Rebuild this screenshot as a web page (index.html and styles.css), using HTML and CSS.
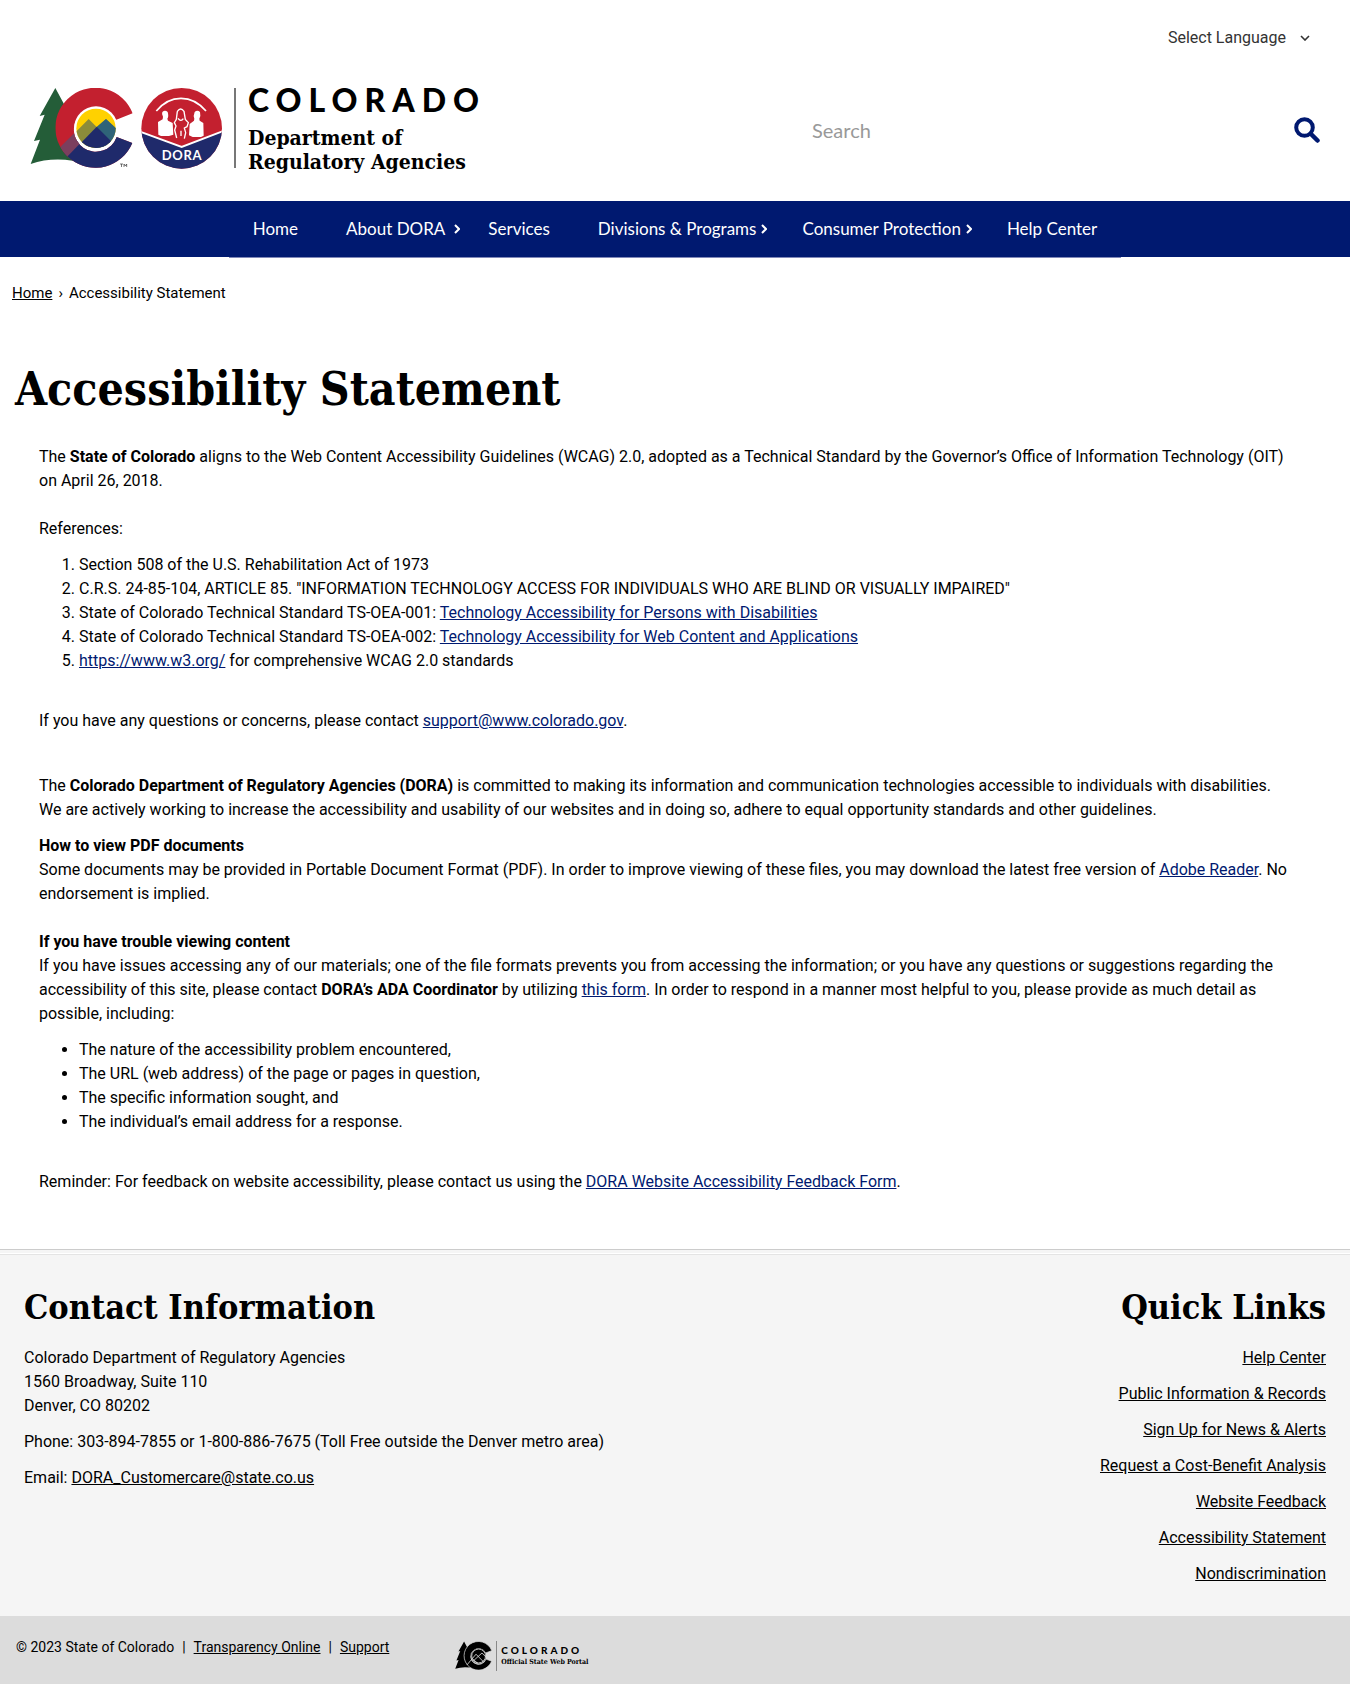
FILE: index.html
```html
<!DOCTYPE html>
<html lang="en">
<head>
<meta charset="utf-8">
<meta name="viewport" content="width=device-width, initial-scale=1">
<title>Accessibility Statement | Department of Regulatory Agencies</title>
<link rel="stylesheet" href="styles.css">
</head>
<body>
<header class="site-header">
  <div class="language">
    <button type="button" class="language-button">Select Language
      <svg width="10" height="6" viewBox="0 0 10 6" aria-hidden="true"><path d="M1 1l4 4 4-4" fill="none" stroke="currentColor" stroke-width="1.6"/></svg>
    </button>
  </div>
  <div class="masthead">
    <a class="brand" href="#" aria-label="Colorado Department of Regulatory Agencies">
      <svg class="brand-mark" viewBox="90 54 576 243" aria-hidden="true">
        <defs>
          <clipPath id="c-shape"><path d="M398 130A120 120 0 1 0 397 219L350 201A66 66 0 1 1 347 150Z"/></clipPath>
          <clipPath id="sun"><circle cx="288" cy="175" r="59"/></clipPath>
          <clipPath id="seal"><circle cx="545" cy="175" r="121"/></clipPath>
        </defs>
        <path d="M166 54L206 128L230 270L218 272Q150 262 92 282L120 209L102 213L134 134L119 138Z" fill="#245d38"/>
        <g clip-path="url(#c-shape)">
          <rect x="160" y="50" width="250" height="250" fill="#c3202f"/>
          <path d="M190 250L240 198L290 190L420 190V300H190Z" fill="#1f2a6b"/>
          <path d="M180 232L226 186L250 210L200 262Z" fill="#7b3f5e"/>
        </g>
        <circle cx="288" cy="175" r="66" fill="#fff"/>
        <g clip-path="url(#sun)">
          <rect x="222" y="110" width="132" height="130" fill="#ffd100"/>
          <path d="M218 195L266 147L290 171L318 147L356 182V240H218Z" fill="#8b8c3a"/>
          <path d="M290 171L318 147L356 182V240H290Z" fill="#2f6378"/>
          <path d="M226 236L290 170L356 236V250H226Z" fill="#1f2a6b"/>
        </g>
        <path d="M360 282h9M364.500 282v9M372 291v-9l4 6 4-6v9" fill="none" stroke="#333" stroke-width="2"/>
        <g clip-path="url(#seal)">
          <rect x="420" y="50" width="250" height="250" fill="#c3202f"/>
          <path d="M420 186L545 232L670 184V300H420Z" fill="#1f2a6b"/>
          <path d="M420 185L545 231L670 183" fill="none" stroke="#fff" stroke-width="6"/>
        </g>
        <path d="M469 123Q500 85 543 85Q586 85 618 123" fill="none" stroke="#fff" stroke-width="5"/>
        <path d="M487 126q8-7 16 0q4 14-1 20l2 6 14 7 2 35-13 4h-24l-8-4-1-38 14-8 1-8q-5-6-2-14Z" fill="#fff"/>
        <path d="M584 126q8-7 16 0q3 12-2 20l1 6 11 7 1 38-8 4h-25l-11-5 2-34 13-10 1-6q-4-8 1-20Z" fill="#fff"/>
        <path d="M532 124q10-14 20 0l4 24 9 10-4 12-8 4 4 14-4 18M532 124l-3 24-6 10 5 10-4 12 6 24M534 145q9 12 16 1M543 182v16" fill="none" stroke="#fff" stroke-width="4"/>
        <text x="546" y="270" class="seal-text">DORA</text>
      </svg>
      <span class="brand-name">
        <span class="brand-state">COLORADO</span>
        <span class="brand-dept">Department of<br>Regulatory Agencies</span>
      </span>
    </a>
    <form class="search" role="search">
      <input class="search-input" type="search" placeholder="Search" aria-label="Search">
      <button class="search-button" type="submit" aria-label="Search">
        <svg width="26" height="26" viewBox="0 0 26 26" aria-hidden="true"><circle cx="10.500" cy="10.500" r="8.300" fill="none" stroke="currentColor" stroke-width="4"/><path d="M17 17l6.500 6.500" stroke="currentColor" stroke-width="4.500" stroke-linecap="round"/></svg>
      </button>
    </form>
  </div>
</header>

<nav class="main-nav" aria-label="Main">
  <ul class="nav-list">
    <li><a href="#">Home</a></li>
    <li><a class="has-menu has-menu-wide" href="#">About DORA <svg class="caret" viewBox="0 0 6 10" aria-hidden="true"><path d="M1 1l4 4-4 4"/></svg></a></li>
    <li><a href="#">Services</a></li>
    <li><a class="has-menu" href="#">Divisions &amp; Programs <svg class="caret" viewBox="0 0 6 10" aria-hidden="true"><path d="M1 1l4 4-4 4"/></svg></a></li>
    <li><a class="has-menu" href="#">Consumer Protection <svg class="caret" viewBox="0 0 6 10" aria-hidden="true"><path d="M1 1l4 4-4 4"/></svg></a></li>
    <li><a href="#">Help Center</a></li>
  </ul>
</nav>

<nav class="breadcrumb" aria-label="Breadcrumb"><a href="#">Home</a><span>›</span><span>Accessibility Statement</span></nav>

<main>
  <h1>Accessibility Statement</h1>
  <div class="content">
    <p class="wide-after">The <strong>State of Colorado</strong> aligns to the Web Content Accessibility Guidelines (WCAG) 2.0, adopted as a Technical Standard by the Governor’s Office of Information Technology (OIT) on&nbsp;April 26, 2018.</p>
    <p>References:</p>
    <ol>
      <li>Section 508 of the U.S. Rehabilitation Act of 1973</li>
      <li>C.R.S. 24-85-104, ARTICLE 85. "INFORMATION TECHNOLOGY ACCESS FOR INDIVIDUALS WHO ARE BLIND OR VISUALLY IMPAIRED"</li>
      <li>State of Colorado Technical Standard TS-OEA-001: <a href="#">Technology Accessibility for Persons with Disabilities</a></li>
      <li>State of Colorado Technical Standard TS-OEA-002: <a href="#">Technology Accessibility for Web Content and Applications</a></li>
      <li><a href="#">https://www.w3.org/</a> for comprehensive WCAG 2.0 standards</li>
    </ol>
    <p class="section-end">If you have any questions or concerns, please contact <a href="#">support@www.colorado.gov</a>.</p>
    <p>The <strong>Colorado Department of Regulatory Agencies (DORA)</strong> is committed to making its information and communication technologies accessible to individuals with disabilities.<br>We are actively working to increase the accessibility and usability of our websites and in doing so, adhere to equal opportunity standards and other guidelines.</p>
    <p class="wide-after"><strong>How to view PDF documents</strong><br>Some documents may be provided in Portable Document Format (PDF). In order to improve viewing of these files, you may download the latest free version of <a href="#">Adobe Reader</a>. No endorsement is implied.</p>
    <p><strong>If you have trouble viewing content</strong><br>If you have issues accessing any of our materials; one of the file formats prevents you from accessing the information; or you have any questions or suggestions regarding the accessibility of this site, please contact <strong>DORA’s ADA Coordinator</strong> by utilizing <a href="#">this form</a>. In order to respond in a manner most helpful to you, please provide as much detail as possible, including:</p>
    <ul>
      <li>The nature of the accessibility problem encountered,</li>
      <li>The URL (web address) of the page or pages in question,</li>
      <li>The specific information sought, and</li>
      <li>The individual’s email address for a response.</li>
    </ul>
    <p>Reminder: For feedback on website accessibility, please contact us using the <a href="#">DORA Website Accessibility Feedback Form</a>.</p>
  </div>
</main>

<footer class="site-footer">
  <div class="footer-columns">
    <section>
      <h2>Contact Information</h2>
      <p>Colorado Department of Regulatory Agencies<br>1560 Broadway, Suite 110<br>Denver, CO 80202</p>
      <p>Phone: 303-894-7855 or 1-800-886-7675 (Toll Free outside the Denver metro area)</p>
      <p>Email: <a href="#">DORA_Customercare@state.co.us</a></p>
    </section>
    <section class="quick-links">
      <h2>Quick Links</h2>
      <p><a href="#">Help Center</a></p>
      <p><a href="#">Public Information &amp; Records</a></p>
      <p><a href="#">Sign Up for News &amp; Alerts</a></p>
      <p><a href="#">Request a Cost-Benefit Analysis</a></p>
      <p><a href="#">Website Feedback</a></p>
      <p><a href="#">Accessibility Statement</a></p>
      <p><a href="#">Nondiscrimination</a></p>
    </section>
  </div>
  <div class="legal">
    <div class="legal-links"><span>© 2023 State of Colorado</span><span>|</span><a href="#">Transparency Online</a><span>|</span><a href="#">Support</a></div>
    <a class="portal" href="#" aria-label="Colorado Official State Web Portal">
      <svg class="portal-mark" viewBox="90 52 310 246" aria-hidden="true">
        <path d="M166 54L206 128L230 270L218 272Q150 262 92 282L120 209L102 213L134 134L119 138Z"/>
        <path d="M398 130A120 120 0 1 0 397 219L350 201A66 66 0 1 1 347 150Z" stroke="#dcdcdc" stroke-width="6"/>
        <circle cx="288" cy="175" r="62"/>
        <path d="M190 250L266 160L330 225M250 210L316 150L350 185M236 200L280 235M346 175A58 58 0 1 1 288 117A58 58 0 0 1 346 175" fill="none" stroke="#dcdcdc" stroke-width="7"/>
      </svg>
      <span class="portal-name"><span class="portal-state">COLORADO</span><span class="portal-tag">Official State Web Portal</span></span>
    </a>
  </div>
</footer>
</body>
</html>
```
FILE: styles.css
```css
* { box-sizing: border-box; }
body {
  margin: 0;
  background: #fff;
  color: #000;
  font: 16px/24px Roboto, "Open Sans", sans-serif;
}
a { color: #001970; }
p { margin: 0 0 12px; }
button { border: 0; padding: 0; background: none; font: inherit; cursor: pointer; }

.site-header { padding: 26px 30px 32px; }
.language { display: flex; justify-content: flex-end; padding-right: 10px; }
.language-button { display: flex; align-items: center; gap: 14px; color: #333; }
.masthead { display: flex; justify-content: space-between; padding-top: 36px; }

.brand { display: flex; color: #000; text-decoration: none; }
.brand-mark { width: 192px; height: 81px; margin-top: 2px; }
.seal-text { font: 700 39px Lato, sans-serif; fill: #fff; text-anchor: middle; letter-spacing: 2px; }
.brand-name { display: flex; flex-direction: column; height: 80px; margin: 2px 0 0 12px; padding-left: 12px; border-left: 2px solid #777; }
.brand-state { font: 900 32px/24px Lato, sans-serif; letter-spacing: 7px; }
.brand-dept { margin-top: 14px; font: 700 21px/24px "DejaVu Serif Condensed", "DejaVu Serif", serif; }

.search { display: flex; align-items: center; width: 40%; padding: 4px 0 0 8px; }
.search-input { flex: 1; min-width: 0; height: 40px; border: 0; padding: 0; background: none; font: 20px/24px Lato, sans-serif; }
.search-input::placeholder { color: #999; opacity: 1; }
.search-button { display: flex; color: #001970; }

.main-nav { display: flex; justify-content: center; height: 56px; background: #001970; }
.nav-list { display: flex; height: 57px; margin: 0; padding: 0; list-style: none; border-bottom: 1px solid #8088b8; }
.nav-list a { display: flex; align-items: center; height: 56px; padding: 0 24px; color: #fff; font-family: Lato, sans-serif; font-size: 17px; text-decoration: none; }
.nav-list .has-menu { gap: 5px; padding-right: 11px; }
.nav-list .has-menu-wide { gap: 9px; padding-right: 4px; }
.caret { width: 6px; height: 10px; fill: none; stroke: currentColor; stroke-width: 2; }

.breadcrumb { display: flex; gap: 6px; padding: 24px 12px; font-size: 15px; }
.breadcrumb a { color: #000; }

h1 { margin: 28px 0 0; padding: 0 15px; font: 700 46px/64px "DejaVu Serif Condensed", "DejaVu Serif", serif; }
.content { padding: 24px 39px 43px; }
.wide-after { margin-bottom: 24px; }
.section-end { margin-bottom: 41px; }
.content ol, .content ul { margin: 0 0 36px; padding-left: 40px; }

.site-footer { border-top: 1px solid #ccc; padding-top: 3px; background: #f5f5f5; }
.footer-columns { display: flex; justify-content: space-between; padding: 29px 24px 18px; border-top: 1px solid #fff; box-shadow: inset 0 1px #e4e4e4; }
.footer-columns a { color: #000; }
.quick-links { text-align: right; }
h2 { margin: 0 0 15px; font: 700 34px/48px "DejaVu Serif Condensed", "DejaVu Serif", serif; }

.legal { display: flex; align-items: flex-start; gap: 66px; padding: 19px 16px 13px; background: #dcdcdc; font-size: 14px; }
.legal a { color: #000; }
.legal-links { display: flex; gap: 8px; }
.portal { display: flex; padding-top: 6px; text-decoration: none; }
.portal-mark { width: 37px; height: 30px; }
.portal-name { display: flex; flex-direction: column; margin-left: 4px; padding: 3px 0 0 4px; border-left: 1px solid #888; }
.portal-state { font: 900 10px/12px Lato, sans-serif; letter-spacing: 3px; }
.portal-tag { font: 700 7px/12px "DejaVu Serif Condensed", "DejaVu Serif", serif; }
```
